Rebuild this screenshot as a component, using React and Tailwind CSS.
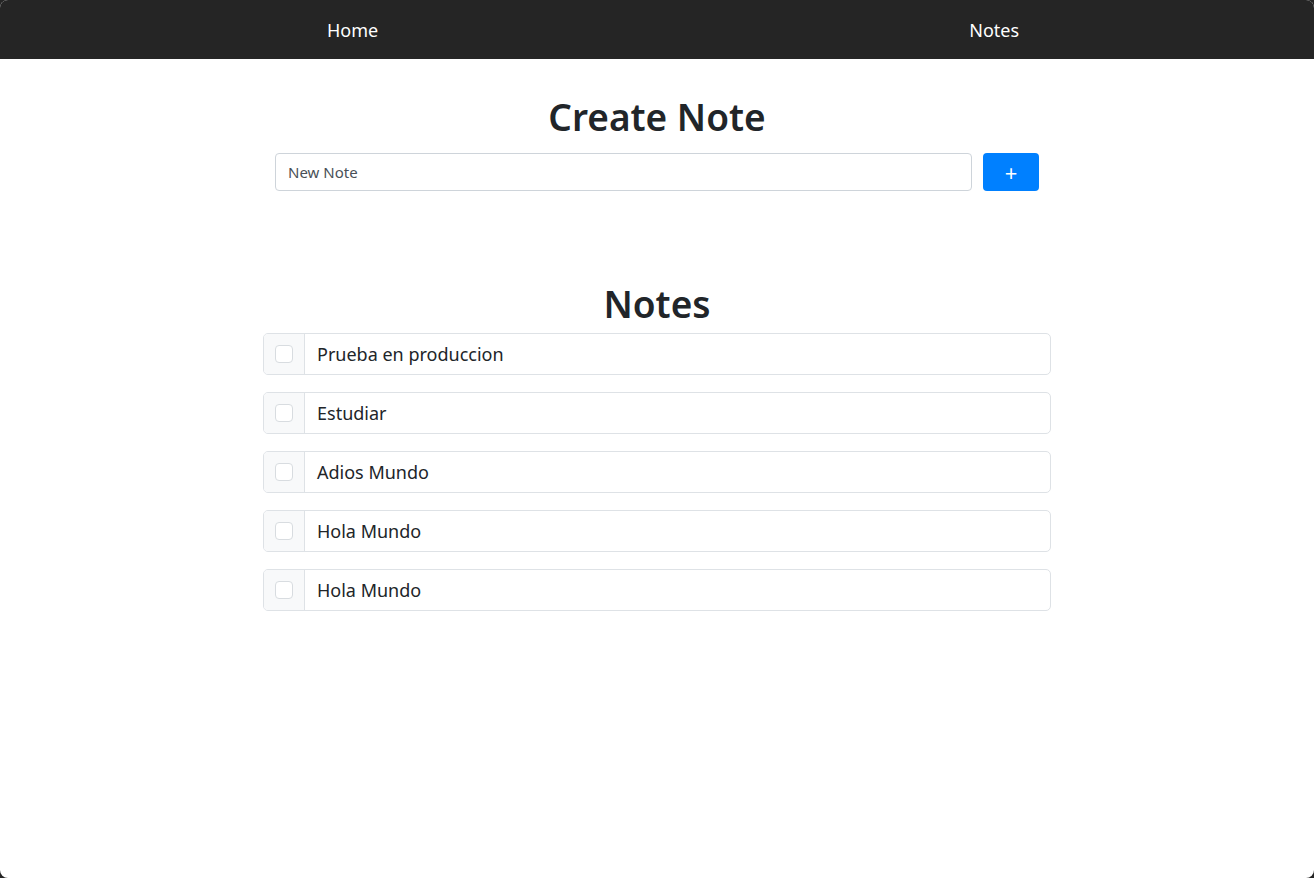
import { useState } from 'react';

const font = { fontFamily: '"Noto Sans", "Open Sans", sans-serif' };

function NoteRow({ text }) {
  return (
    <div className="flex h-[42px] rounded-[5px] border border-[#dee2e6] overflow-hidden">
      <div className="w-[41px] shrink-0 flex items-center justify-center bg-[#f8f9fa] border-r border-[#dee2e6]">
        <span className="w-[18px] h-[18px] rounded-[4px] border border-[#d8dce0] bg-white" />
      </div>
      <div className="flex items-center pl-3 text-[18px] text-[#212529]">{text}</div>
    </div>
  );
}

export default function App() {
  const [notes] = useState([
    'Prueba en produccion',
    'Estudiar',
    'Adios Mundo',
    'Hola Mundo',
    'Hola Mundo',
  ]);

  return (
    <div className="min-h-[878px] bg-[#252525]" style={font}>
      <div className="min-h-[878px] bg-white rounded-lg overflow-hidden flex flex-col">
        {/* Nav */}
        <nav className="h-[59px] pt-[2px] bg-[#252525] flex items-center text-white text-[18px]">
          <a className="ml-[327px]">Home</a>
          <a className="ml-[591px]">Notes</a>
        </nav>

        <div className="w-[788px] mx-auto">
          {/* Create */}
          <h1 className="mt-[35px] text-center text-[37px] leading-[46px] font-semibold text-[#212529]">
            Create Note
          </h1>
          <div className="mt-[13px] mx-3 flex gap-[11px]">
            <input
              className="flex-1 h-[38px] rounded-[4px] border border-[#ced4da] px-3 text-[15px] text-[#495057] placeholder:text-[#495057] outline-none"
              placeholder="New Note"
            />
            <button className="w-[56px] h-[38px] rounded-[4px] bg-[#0080ff] text-white text-[22px] leading-none">
              +
            </button>
          </div>

          {/* List */}
          <h2 className="mt-[90px] text-center text-[37px] leading-[46px] font-semibold text-[#212529]">
            Notes
          </h2>
          <div className="mt-[6px] flex flex-col gap-[17px]">
            {notes.map((n, i) => (
              <NoteRow key={i} text={n} />
            ))}
          </div>
        </div>
      </div>
    </div>
  );
}
